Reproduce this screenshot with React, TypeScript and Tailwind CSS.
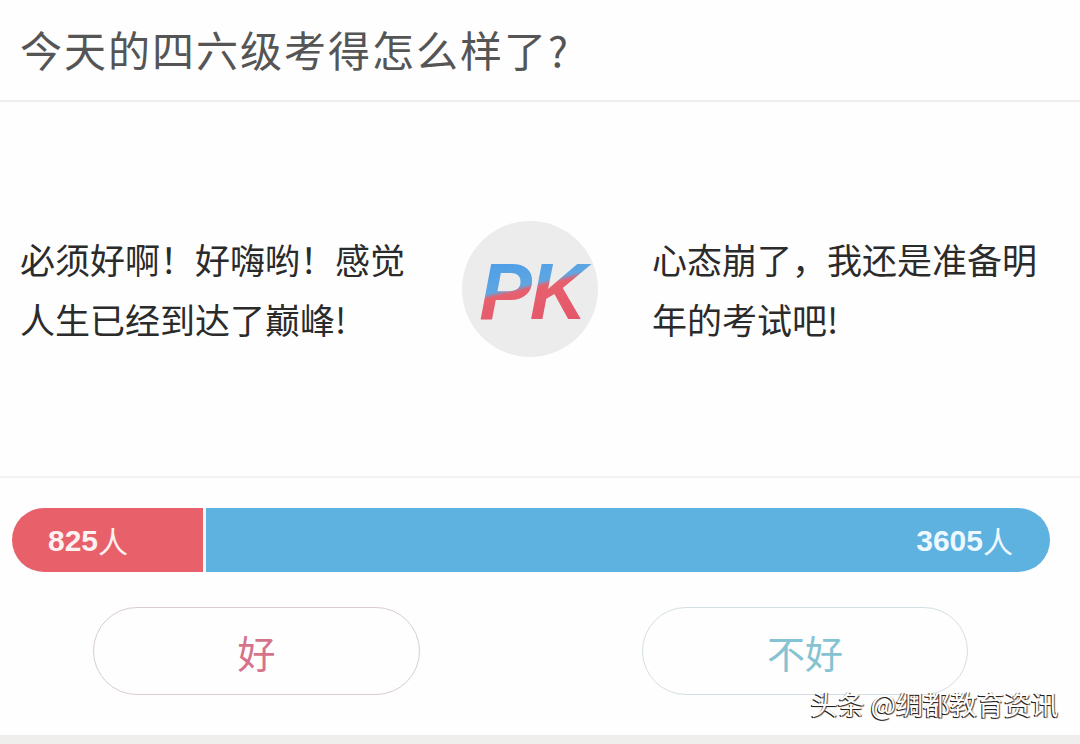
import React from "react";

const font = '"Noto Sans CJK SC", "Noto Sans", sans-serif';
const numFont = '"Liberation Sans", "Noto Sans CJK SC", sans-serif';

function PKLogo() {
  return (
    <div className="w-[136px] h-[136px] rounded-full bg-[#ececec] flex items-center justify-center">
      <svg width="136" height="136" viewBox="0 0 136 136">
        <defs>
          <linearGradient
            id="pkg"
            gradientUnits="userSpaceOnUse"
            x1="50"
            y1="30"
            x2="68.7"
            y2="107.8"
          >
            <stop offset="0" stopColor="#4a9ce8" />
            <stop offset="0.45" stopColor="#5ea6e2" />
            <stop offset="0.51" stopColor="#e7606e" />
            <stop offset="1" stopColor="#e4576a" />
          </linearGradient>
        </defs>
        <text
          x="70"
          y="98"
          textAnchor="middle"
          fontFamily='"Liberation Sans", Arial, sans-serif'
          fontWeight="bold"
          fontStyle="italic"
          fontSize="79"
          fill="url(#pkg)"
          letterSpacing="-2"
        >
          PK
        </text>
      </svg>
    </div>
  );
}

export default function App() {
  return (
    <div
      className="relative w-[1080px] h-[744px] bg-[#fefefe] flex flex-col overflow-hidden"
      style={{ fontFamily: font }}
    >
      {/* Header */}
      <div className="h-[102px] flex items-center pl-[20px] border-b-2 border-[#efefef] shrink-0">
        <div className="text-[42px] leading-none text-[#555555] tracking-[2px] pb-[2px]">
          今天的四六级考得怎么样了?
        </div>
      </div>

      {/* Middle */}
      <div className="h-[376px] flex items-center border-b-2 border-[#f2f2f2] shrink-0">
        <div className="w-[462px] pl-[20px] text-[35px] leading-[60px] text-[#2b2b2b]">
          <div>必须好啊！好嗨哟！感觉</div>
          <div>人生已经到达了巅峰!</div>
        </div>
        <PKLogo />
        <div className="pl-[54px] text-[35px] leading-[60px] text-[#2b2b2b]">
          <div>心态崩了，我还是准备明</div>
          <div>年的考试吧!</div>
        </div>
      </div>

      {/* Bar */}
      <div className="pt-[30px] pl-[12px] shrink-0">
        <div className="w-[1038px] h-[64px] rounded-full overflow-hidden flex">
          <div
            className="w-[191px] bg-[#e8606a] flex items-center pl-[36px] text-[#fdf2f2] text-[30px] font-bold"
            style={{ fontFamily: numFont }}
          >
            825<span className="font-normal" style={{ fontFamily: font }}>人</span>
          </div>
          <div className="w-[3px] bg-[#f6f6f6]" />
          <div
            className="flex-1 bg-[#5eb2e0] flex items-center justify-end pr-[37px] text-[#eef8ff] text-[30px] font-bold"
            style={{ fontFamily: numFont }}
          >
            3605<span className="font-normal" style={{ fontFamily: font }}>人</span>
          </div>
        </div>
      </div>

      {/* Buttons */}
      <div className="pt-[35px] flex shrink-0">
        <div className="ml-[93px] w-[327px] h-[88px] rounded-full border border-[#d9cdd0] flex items-center justify-center text-[38px] text-[#d5738c]">
          好
        </div>
        <div className="ml-[222px] w-[326px] h-[88px] rounded-full border border-[#d3dfe2] flex items-center justify-center text-[38px] text-[#86c3d2]">
          不好
        </div>
      </div>

      <div className="flex-1" />
      <div className="h-[9px] bg-[#efeeec] shrink-0" />

      {/* Watermark */}
      <div
        className="absolute right-[22px] top-[690px] text-[27px] leading-none text-white"
        style={{ textShadow: "-1px 1px 0 #222, 1px 1px 1px #444" }}
      >
        头条 @绸都教育资讯
      </div>
    </div>
  );
}
